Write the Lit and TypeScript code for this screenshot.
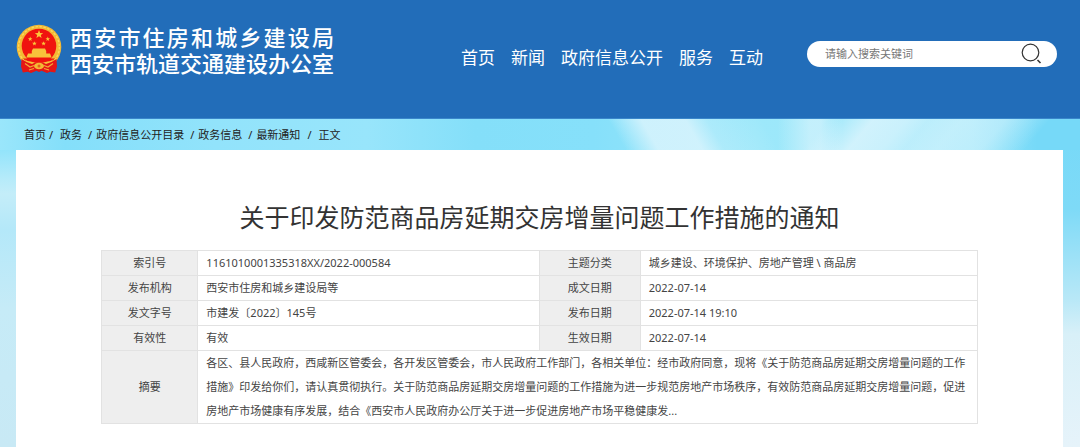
import { LitElement, html, css, svg } from "lit";
import { customElement } from "lit/decorators.js";

const NAV = ["首页", "新闻", "政府信息公开", "服务", "互动"];

const ROWS = [
  ["索引号", "1161010001335318XX/2022-000584", "主题分类", "城乡建设、环境保护、房地产管理 \\ 商品房"],
  ["发布机构", "西安市住房和城乡建设局等", "成文日期", "2022-07-14"],
  ["发文字号", "市建发〔2022〕145号", "发布日期", "2022-07-14 19:10"],
  ["有效性", "有效", "生效日期", "2022-07-14"],
];

const SUMMARY =
  "各区、县人民政府，西咸新区管委会，各开发区管委会，市人民政府工作部门，各相关单位：经市政府同意，现将《关于防范商品房延期交房增量问题的工作措施》印发给你们，请认真贯彻执行。关于防范商品房延期交房增量问题的工作措施为进一步规范房地产市场秩序，有效防范商品房延期交房增量问题，促进房地产市场健康有序发展，结合《西安市人民政府办公厅关于进一步促进房地产市场平稳健康发...";

const star = (x: number, y: number, r: number) => {
  const points = Array.from({ length: 10 }, (_, i) => {
    const a = (Math.PI / 5) * i - Math.PI / 2;
    const d = i % 2 ? r * 0.42 : r;
    return `${(x + d * Math.cos(a)).toFixed(2)},${(y + d * Math.sin(a)).toFixed(2)}`;
  }).join(" ");
  return svg`<polygon points=${points} fill="#fbc93a"></polygon>`;
};

@customElement("site-emblem")
class SiteEmblem extends LitElement {
  static styles = css`
    :host { display: block; flex: none; }
    svg { display: block; }
  `;
  render() {
    return html`<svg width="46" height="50" viewBox="0 0 46 50" aria-hidden="true">
      <circle cx="23" cy="23" r="22.300" fill="#f3b935"></circle>
      <circle cx="23" cy="23" r="20.400" fill="none" stroke="#fbd95a" stroke-width="1.400" stroke-dasharray="2.400 1.600"></circle>
      <circle cx="23" cy="22" r="17.300" fill="#f0140f"></circle>
      ${star(23, 10.5, 4.4)} ${star(14.2, 15, 2.4)} ${star(31.8, 15, 2.4)} ${star(18.4, 19.6, 2.4)} ${star(27.6, 19.6, 2.4)}
      <path d="M17 24.500h12l1.200 2.500v2.500H34l1.600 4H10.400L12 29.500h3.800V27z" fill="#f8c23a"></path>
      <path d="M7 34.500h32l-3.500 3h-25z" fill="#f0140f"></path>
      <path d="M9 35.500c4 3 9 3.300 14 3.300s10-.3 14-3.300l-2 4.700H11z" fill="#f8c23a"></path>
      <path d="M5.500 35l5 3 5.500 2 3-1.500h8l3 1.500 5.500-2 5-3 .5 7.500-1.800 6-5-.8-3.200 1.300-5.500-2.300L23 48l-2.500-1.300L15 49l-3.200-1.300-5 .8-1.800-6z" fill="#e51614"></path>
      <path d="M9 39.500l5 3.500 4-1.500M37 39.500l-5 3.500-4-1.500M13 46l5-1.500M33 46l-5-1.500" fill="none" stroke="#f3a935" stroke-width="1.300"></path>
      <ellipse cx="23" cy="42" rx="5" ry="3.200" fill="#f3b935"></ellipse>
      <circle cx="23" cy="42" r="1.500" fill="#e8601c"></circle>
    </svg>`;
  }
}

@customElement("app-root")
class AppRoot extends LitElement {
  static styles = css`
    :host {
      display: flex;
      flex-direction: column;
      min-height: 100vh;
      font-family: "Noto Sans", "Noto Sans CJK SC", sans-serif;
      font-size: 11px;
      line-height: 24px;
      color: #444;
    }
    * { box-sizing: border-box; }
    a { color: inherit; text-decoration: none; }

    .header {
      display: flex;
      align-items: flex-start;
      padding: 23px 23px 43px 16px;
      background: #226db9;
      border-bottom: 1px solid #3a86cb;
      color: #fff;
    }
    .brand { display: flex; align-items: center; gap: 8px; }
    .names {
      width: 264px;
      font: 500 22px/26px "Noto Sans CJK SC", sans-serif;
    }
    .name { display: block; text-align-last: justify; white-space: nowrap; }
    .nav {
      display: flex;
      gap: 16px;
      margin: 22px 0 0 auto;
      font-size: 17px;
      line-height: 26px;
      white-space: nowrap;
    }
    .search {
      display: flex;
      align-items: center;
      width: 250px;
      height: 26px;
      margin: 18px 0 0 44px;
      padding: 0 14px 0 18px;
      background: #fff;
      border-radius: 13px;
    }
    .field {
      flex: 1;
      min-width: 0;
      padding: 0;
      border: 0;
      outline: 0;
      background: none;
      font: inherit;
      color: #444;
    }
    .field::placeholder { color: #777; opacity: 1; }
    .go { display: block; padding: 0; border: 0; background: none; cursor: pointer; }
    .go svg { display: block; }

    .sky {
      flex: 1;
      display: flex;
      flex-direction: column;
      padding: 0 17px 0 16px;
      background:
        linear-gradient(180deg, #76d9f8 0, #7edaf7 90px, #9be1f7 135px, #b8e8f7 180px, #d8f0f8 215px, #e6f3fa 100%) right / 17px 100% no-repeat,
        linear-gradient(180deg, #8be2fb 0, #93e4fb 31px, #b6ebfa 60px, #c4edf9 75px, #b4e8f9 110px, #c6ebf7 190px, #c8e9f5 100%);
    }
    .crumbs {
      display: flex;
      margin: 0 -17px 0 -16px;
      padding: 4px 24px 3px;
      background:
        linear-gradient(60deg, transparent 57%, rgba(222, 245, 253, 0.8) 60%, rgba(222, 245, 253, 0.8) 64%, rgba(222, 245, 253, 0.3) 66%, transparent 71%),
        linear-gradient(90deg, transparent 72%, rgba(222, 245, 253, 0.6) 75%, rgba(222, 245, 253, 0.6) 76%, transparent 78%),
        linear-gradient(130deg, transparent 75%, rgba(222, 245, 253, 0.8) 79%, rgba(222, 245, 253, 0.7) 82%, rgba(222, 245, 253, 0.5) 84%, rgba(222, 245, 253, 0.6) 87%, rgba(222, 245, 253, 0.5) 91%, transparent 95%),
        linear-gradient(90deg, #9ae6fb 0, #84dffa 6%, #92e3fb 20%, #98e5fb 34%, #84dff9 44%, #86e0fa 55%, #9de8fa 70%, #98e6fa 90%, #76d9f8 96%);
      color: #222;
      white-space: nowrap;
    }
    .crumbs ol { display: flex; margin: 0; padding: 0; list-style: none; }
    .crumbs li + li::before { content: "/"; margin: 0 4px 0 6px; }
    .crumbs .section::before { margin: 0 7px 0 3px; }
    .crumbs .current::before { margin: 0 7px; }
    .page {
      flex: 1;
      padding: 49px 85px 22px;
      background: #fff;
    }
    .title {
      margin: 0 0 15px;
      font-size: 25px;
      line-height: 36px;
      font-weight: 400;
      text-align: center;
      color: #333;
    }
    .info {
      width: 100%;
      table-layout: fixed;
      border-collapse: collapse;
    }
    .label { width: 11%; }
    .value { width: 39%; }
    .label-end { width: 11.5%; }
    th, td {
      padding: 0 8px;
      border: 1px solid #e2e2e2;
      font-weight: 400;
    }
    th { background: #eee; text-align: center; }
    td { text-align: left; }
  `;

  render() {
    return html`
      <header class="header">
        <a class="brand" href="#">
          <site-emblem></site-emblem>
          <span class="names">
            <span class="name">西安市住房和城乡建设局</span>
            <span class="name">西安市轨道交通建设办公室</span>
          </span>
        </a>
        <nav class="nav">${NAV.map((item) => html`<a href="#">${item}</a>`)}</nav>
        <form class="search" role="search">
          <input class="field" type="text" placeholder="请输入搜索关键词" aria-label="请输入搜索关键词" />
          <button class="go" type="button" aria-label="搜索">
            <svg width="24" height="22" viewBox="0 0 24 22" fill="none" stroke="#333">
              <circle cx="11.500" cy="9.500" r="8.300" stroke-width="1.200"></circle>
              <path d="M18.500 17l3 3" stroke-width="1.600"></path>
            </svg>
          </button>
        </form>
      </header>
      <main class="sky">
        <nav class="crumbs">
          <ol>
            <li><a href="#">首页</a></li>
            <li class="section"><a href="#">政务</a></li>
            <li><a href="#">政府信息公开目录</a></li>
            <li><a href="#">政务信息</a></li>
            <li><a href="#">最新通知</a></li>
            <li class="current">正文</li>
          </ol>
        </nav>
        <article class="page">
          <h1 class="title">关于印发防范商品房延期交房增量问题工作措施的通知</h1>
          <table class="info">
            <colgroup>
              <col class="label" /><col class="value" /><col class="label-end" /><col />
            </colgroup>
            <tbody>
              ${ROWS.map(
                ([a, b, c, d]) => html`<tr>
                  <th scope="row">${a}</th><td>${b}</td>
                  <th scope="row">${c}</th><td>${d}</td>
                </tr>`
              )}
              <tr>
                <th scope="row">摘要</th>
                <td colspan="3">${SUMMARY}</td>
              </tr>
            </tbody>
          </table>
        </article>
      </main>
    `;
  }
}
